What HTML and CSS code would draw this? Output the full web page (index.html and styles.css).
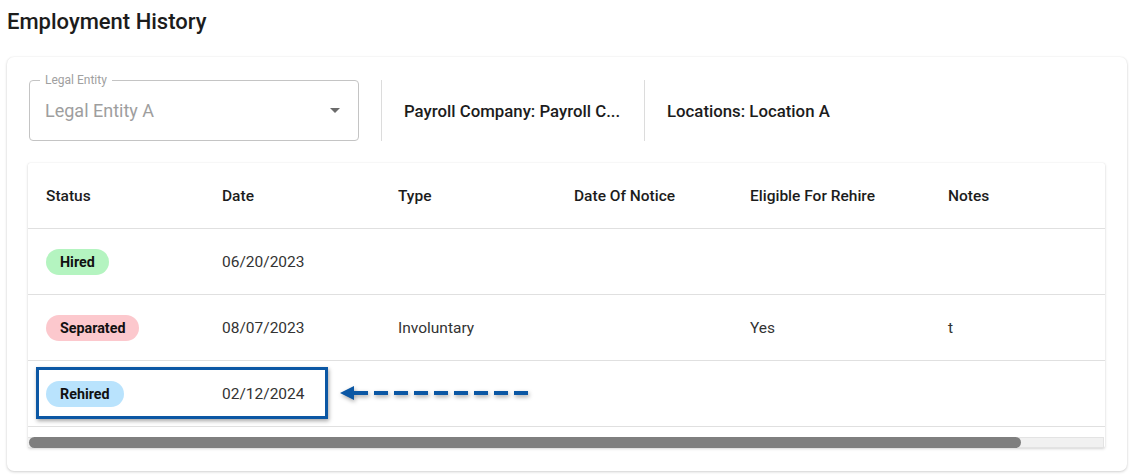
FILE: index.html
```html
<!DOCTYPE html>
<html>
<head>
<meta charset="utf-8">
<link rel="stylesheet" href="styles.css">
</head>
<body>
<div class="page">
  <h1 class="title">Employment History</h1>
  <div class="card">
    <div class="filters">
      <div class="select">
        <span class="select-label">Legal Entity</span>
        <span class="select-value">Legal Entity A</span>
        <span class="select-arrow"></span>
      </div>
      <div class="divider"></div>
      <div class="info info-payroll">Payroll Company: Payroll C...</div>
      <div class="divider"></div>
      <div class="info">Locations: Location A</div>
    </div>
    <div class="table-card">
      <div class="row head">
        <div class="cell c1">Status</div>
        <div class="cell c2">Date</div>
        <div class="cell c3">Type</div>
        <div class="cell c4">Date Of Notice</div>
        <div class="cell c5">Eligible For Rehire</div>
        <div class="cell c6">Notes</div>
      </div>
      <div class="row">
        <div class="cell c1"><span class="chip chip-hired">Hired</span></div>
        <div class="cell c2">06/20/2023</div>
        <div class="cell c3"></div>
        <div class="cell c4"></div>
        <div class="cell c5"></div>
        <div class="cell c6"></div>
      </div>
      <div class="row">
        <div class="cell c1"><span class="chip chip-separated">Separated</span></div>
        <div class="cell c2">08/07/2023</div>
        <div class="cell c3">Involuntary</div>
        <div class="cell c4"></div>
        <div class="cell c5">Yes</div>
        <div class="cell c6">t</div>
      </div>
      <div class="row last">
        <div class="cell c1"><span class="chip chip-rehired">Rehired</span></div>
        <div class="cell c2">02/12/2024</div>
        <div class="cell c3"></div>
        <div class="cell c4"></div>
        <div class="cell c5"></div>
        <div class="cell c6"></div>
        <div class="highlight"></div>
        <svg class="arrow" width="192" height="16" viewBox="0 0 192 16">
          <line x1="14" y1="8" x2="188" y2="8" stroke="#0b57a4" stroke-width="4" stroke-dasharray="14 6" stroke-linecap="butt"/>
          <polygon points="0,8 14,1 14,15" fill="#0b57a4"/>
        </svg>
      </div>
      <div class="scroll">
        <div class="scroll-track"><div class="scroll-thumb"></div></div>
      </div>
    </div>
  </div>
</div>
</body>
</html>
```

FILE: styles.css
```css
* { box-sizing: border-box; }
html, body { margin: 0; padding: 0; background: #ffffff; }
body { font-family: Roboto, "Liberation Sans", sans-serif; color: #1f1f1f; }
.page { width: 1136px; height: 476px; overflow: hidden; }
.title {
  margin: 0;
  padding: 8px 0 0 7px;
  height: 57px;
  font-size: 22px;
  font-weight: 500;
  line-height: 28px;
  color: #1c1c1c;
}
.card {
  margin-left: 7px;
  width: 1120px;
  height: 414px;
  border-radius: 7px;
  background: #fff;
  box-shadow: 0 1px 3px rgba(0,0,0,0.18), 0 0 2px rgba(0,0,0,0.06);
  padding: 23px 23px 0 22px;
}
.filters { display: flex; align-items: center; height: 61px; }
.select {
  position: relative;
  width: 330px;
  height: 61px;
  border: 1px solid #c4c4c4;
  border-radius: 4px;
  display: flex;
  align-items: center;
  padding-left: 15px;
}
.select-label {
  position: absolute;
  top: -9px;
  left: 10px;
  padding: 0 5px;
  background: #fff;
  font-size: 12px;
  line-height: 16px;
  color: #a0a0a0;
}
.select-value { font-size: 18px; color: #9e9e9e; }
.select-arrow {
  position: absolute;
  right: 18px;
  top: 27px;
  width: 0; height: 0;
  border-left: 5px solid transparent;
  border-right: 5px solid transparent;
  border-top: 5px solid #6b6b6b;
}
.divider { width: 1px; height: 61px; background: #dcdcdc; margin-left: 22px; }
.info { font-size: 16.8px; font-weight: 500; color: #1c1c1c; padding-left: 22px; }
.info-payroll { width: 240px; }
.table-card {
  margin-top: 22px;
  margin-left: -1px;
  width: 1077px;
  background: #fff;
  box-shadow: 0 1px 3px rgba(0,0,0,0.16), 0 0 1px rgba(0,0,0,0.12);
  border-radius: 2px;
}
.row {
  position: relative;
  display: flex;
  height: 66px;
  border-bottom: 1px solid #e0e0e0;
  align-items: center;
  font-size: 15.5px;
  color: #333;
}
.row.head { font-weight: 500; color: #1c1c1c; }
.cell { padding-left: 18px; }
.c1, .c2, .c3, .c4 { width: 176px; }
.c5 { width: 198px; }
.c6 { flex: 1; }
.chip {
  display: inline-block;
  height: 26px;
  line-height: 26px;
  padding: 0 14px;
  border-radius: 13px;
  font-weight: 700;
  font-size: 14.3px;
  color: #111;
}
.chip-hired { background: #b4f4c0; }
.chip-separated { background: #fcc8cd; }
.chip-rehired { background: #b9e3fd; }
.highlight {
  position: absolute;
  left: 8px;
  top: 6px;
  width: 292px;
  height: 52px;
  border: 3px solid #0b57a4;
  box-shadow: 1px 2px 4px rgba(0,0,0,0.35);
}
.arrow {
  position: absolute;
  left: 312px;
  top: 24px;
  filter: drop-shadow(1px 2px 2px rgba(0,0,0,0.35));
}
.scroll { height: 21px; padding-top: 10px; }
.scroll-track {
  height: 11px;
  background: #f1f1f1;
  border: 1px solid #e3e3e3;
  border-left: none;
  margin-right: 1px;
}
.scroll-thumb {
  width: 992px;
  height: 11px;
  margin-top: -1px;
  margin-left: 1px;
  background: #7f7f7f;
  border-radius: 6px;
}
```
